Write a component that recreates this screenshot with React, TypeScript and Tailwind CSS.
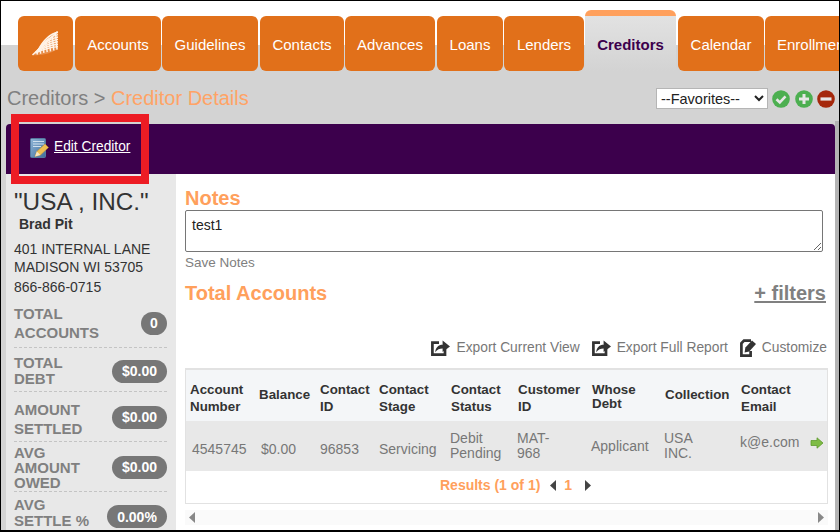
const tabs = [
  { label: "Accounts", cls: "w-[86px] mr-px" },
  { label: "Guidelines", cls: "w-[96px] mr-[2px]" },
  { label: "Contacts", cls: "w-[84px] mr-px" },
  { label: "Advances", cls: "w-[90px] mr-[2px]" },
  { label: "Loans", cls: "w-[66px] mr-px" },
  { label: "Lenders", cls: "w-[80px] mr-px" },
];

const twoLine = "mt-[5px] leading-[17px]";

const columns = [
  { head: ["Account", "Number"], headCls: twoLine, cell: ["4545745"], cellCls: "mt-[6px]", w: "w-[69px]", pl: "pl-[6px]" },
  { head: ["Balance"], headCls: "mb-[2px]", cell: ["$0.00"], cellCls: "mt-[6px]", w: "w-[61px]", pl: "pl-[6px]" },
  { head: ["Contact", "ID"], headCls: twoLine, cell: ["96853"], cellCls: "mt-[6px]", w: "w-[59px]", pl: "pl-[4px]" },
  { head: ["Contact", "Stage"], headCls: twoLine, cell: ["Servicing"], cellCls: "mt-[6px]", w: "w-[72px]", pl: "pl-[4px]" },
  { head: ["Contact", "Status"], headCls: twoLine, cell: ["Debit", "Pending"], cellCls: "", w: "w-[67px]", pl: "pl-[3px]" },
  { head: ["Customer", "ID"], headCls: twoLine, cell: ["MAT-", "968"], cellCls: "", w: "w-[74px]", pl: "pl-[3px]" },
  { head: ["Whose", "Debt"], headCls: "mt-[2px] leading-[14px]", cell: ["Applicant"], cellCls: "", w: "w-[73px]", pl: "pl-[3px]" },
  { head: ["Collection"], headCls: "mb-[2px]", cell: ["USA", "INC."], cellCls: "", w: "w-[76px]", pl: "pl-[3px]" },
  { head: ["Contact", "Email"], headCls: twoLine, cell: ["k@e.com"], cellCls: "mb-[8px]", w: "w-[69px]", pl: "pl-[3px]" },
];

const stats = [
  { label: ["TOTAL", "ACCOUNTS"], value: "0", h: "h-[49px]", lh: "leading-[19px]", badge: "w-[26px]", labelMt: "", badgeMt: "" },
  { label: ["TOTAL", "DEBT"], value: "$0.00", h: "h-[44px]", lh: "leading-[16px]", badge: "w-[55px]", labelMt: "mt-[2px]", badgeMt: "mt-[3px]" },
  { label: ["AMOUNT", "SETTLED"], value: "$0.00", h: "h-[50px]", lh: "leading-[19px]", badge: "w-[55px]", labelMt: "mt-[5px]", badgeMt: "mt-[2px]" },
  { label: ["AVG", "AMOUNT", "OWED"], value: "$0.00", h: "h-[50px]", lh: "leading-[15px]", badge: "w-[55px]", labelMt: "mt-[2px]", badgeMt: "mt-[2px]" },
  { label: ["AVG", "SETTLE %"], value: "0.00%", h: "h-[40px]", lh: "leading-[16px]", badge: "w-[60px]", labelMt: "mt-[2px]", badgeMt: "mt-[9px]" },
];

function Logo() {
  // warped mesh: spokes run from the long top edge down to the bottom edge
  const steps = [1, 2, 3, 4, 5, 6, 7];
  return (
    <svg width="27" height="25" viewBox="0 0 27 25" fill="none" stroke="#fff3e8" strokeWidth="1.45">
      <path d="M0.5 24 L25.5 0.5 L26 18 Q13 25.5 0.5 24Z" fill="#e98d48" stroke="none" />
      <path d="M0.5 24 L25.5 0.5" />
      {steps.map((i) => (
        <path key={`s${i}`} d={`M${0.5 + i * 3.3} ${24 - i * 3.1} Q${2 + i * 3.2} ${20 - i * 0.9} ${2 + i * 3.3} ${24.3 - i * 0.8}`} />
      ))}
      {steps.map((i) => (
        <path key={`c${i}`} d={`M${3 + i * 0.4} ${22.5 - i * 0.4} Q${14} ${19 - i * 2.2} ${26} ${18 - i * 2.4}`} />
      ))}
    </svg>
  );
}

function EditIcon() {
  return (
    <svg width="19" height="20" viewBox="0 0 19 20">
      <defs>
        <linearGradient id="book" x1="0" y1="0" x2="1" y2="1">
          <stop offset="0" stopColor="#8fb6d8" />
          <stop offset="1" stopColor="#3f6d9c" />
        </linearGradient>
      </defs>
      <rect x="0.5" y="0.5" width="15" height="19" rx="1" fill="url(#book)" stroke="#54799e" />
      <path d="M3 3.5h11M3 6h11M3 8.5h8" stroke="#cfe0ee" strokeWidth="1" />
      <path d="M5 18.5 L6.8 13.5 L15 6 L18.5 9.5 L10.5 17Z" fill="#efbe52" stroke="#c48f2a" strokeWidth="0.5" />
      <path d="M5 18.5 L6.8 13.5 L10.5 17Z" fill="#f6e6c2" />
    </svg>
  );
}

function RoundIcon({ color, kind }: { color: string; kind: "check" | "plus" | "minus" }) {
  return (
    <svg width="18" height="18" viewBox="0 0 18 18">
      <circle cx="9" cy="9" r="8.8" fill={color} />
      {kind === "check" && <path d="M4.5 9.2 L7.8 12.4 L13.5 6.4" fill="none" stroke="#e6e6e6" strokeWidth="2.6" />}
      {kind === "plus" && <path d="M9 4v10M4 9h10" stroke="#e6e6e6" strokeWidth="3" />}
      {kind === "minus" && <path d="M3.5 9h11" stroke="#e6e6e6" strokeWidth="3.2" />}
    </svg>
  );
}

function ExportIcon() {
  return (
    <svg width="19" height="16" viewBox="0 0 19 16">
      <path d="M8 2.6H1.4V14.6H14V9" fill="none" stroke="#333" strokeWidth="2.7" />
      <path d="M4.2 12.2 C4.6 7.4 7.6 4.8 11.6 4.8 V0.6 L19 6.4 L11.6 12 V8.6 C8.6 8.6 6.2 9.6 4.2 12.2Z" fill="#333" />
    </svg>
  );
}

function CustomizeIcon() {
  return (
    <svg width="16" height="18" viewBox="0 0 16 18">
      <path d="M11 1.6H4L1.4 4.4V16.6H10.6V12" fill="none" stroke="#333" strokeWidth="2.7" />
      <path d="M4.6 13.4 L5.4 8.6 L12 1.4 L16 5 L9.2 12.4Z" fill="#333" />
    </svg>
  );
}

function Triangle({ dir, color }: { dir: "left" | "right"; color: string }) {
  return (
    <svg width="6" height="11" viewBox="0 0 6 11">
      <path d={dir === "left" ? "M6 0V11L0 5.5Z" : "M0 0V11L6 5.5Z"} fill={color} />
    </svg>
  );
}

export default function App() {
  return (
    <div className="relative h-[532px] w-[840px] overflow-hidden border-t border-r border-b-2 border-l border-black bg-[#d3d3d3] font-['Liberation_Sans',Arial,sans-serif]">
      <header className="h-[44px] bg-white pl-[17px] pt-[9px]">
        <nav className="flex items-end text-[15px] text-white">
          <div className="mr-[2px] flex h-[55px] w-[55px] shrink-0 items-center justify-center rounded-[6px] bg-[#e1701a] pb-px">
            <Logo />
          </div>
          {tabs.map((t) => (
            <a key={t.label} className={`${t.cls} flex h-[55px] shrink-0 items-center justify-center rounded-[6px] bg-[#e1701a] pt-[3px]`}>
              {t.label}
            </a>
          ))}
          <a className="mr-[2px] flex h-[61px] w-[91px] shrink-0 items-center justify-center rounded-t-[6px] border-t-[6px] border-[#ffa05c] bg-[linear-gradient(#e2e2e2,#d3d3d3)] pt-[3px] font-bold text-[#3c004c]">
            Creditors
          </a>
          <a className="mr-px flex h-[55px] w-[86px] shrink-0 items-center justify-center rounded-[6px] bg-[#e1701a] pt-[3px]">Calendar</a>
          <a className="flex h-[55px] w-[86px] shrink-0 items-center rounded-[6px] bg-[#e1701a] pl-[12px] pt-[3px]">Enrollment</a>
        </nav>
      </header>

      <div className="mt-[27px] flex h-[52px] items-start justify-between pl-[6px] pr-[4px] pt-[14px]">
        <div className="text-[20px] leading-[24px] text-[#808080]">
          Creditors &gt; <span className="text-[#ffa366]">Creditor Details</span>
        </div>
        <div className="mt-[2px] flex items-center gap-[4px]">
          <select className="mr-px h-[21px] w-[112px] border border-[#b5b5b5] bg-white text-[14.5px] text-[#222]">
            <option>--Favorites--</option>
          </select>
          <span className="-ml-px mr-px flex">
            <RoundIcon color="#4caf50" kind="check" />
          </span>
          <RoundIcon color="#4caf50" kind="plus" />
          <RoundIcon color="#a5280c" kind="minus" />
        </div>
      </div>

      <div className="ml-[5px] mr-[4px] flex h-[50px] items-center rounded-t-[4px] bg-[#3c004c] pb-[3px] pl-[24px]">
        <EditIcon />
        <a className="ml-[5px] text-[13.75px] text-white underline">Edit Creditor</a>
      </div>

      <div className="ml-[5px] mr-[4px] flex h-[358px] bg-white">
        <aside className="w-[170px] shrink-0 bg-[#e8e8e8] pl-[8px] pr-[9px] text-[#333]">
          <h1 className="mt-[14px] text-[24.3px] leading-[27px] text-[#333]">"USA , INC."</h1>
          <div className="ml-[5px] mt-px text-[14px] font-bold leading-[17px]">Brad Pit</div>
          <div className="mt-[7px] text-[14px] leading-[18px]">401 INTERNAL LANE</div>
          <div className="text-[14px] leading-[18px]">MADISON WI 53705</div>
          <div className="mt-px text-[14px] leading-[20px]">866-866-0715</div>
          <div className="mt-[2px]">
            {stats.map((s, i) => (
              <div
                key={i}
                className={`${s.h} ${s.lh} flex items-center justify-between ${i < stats.length - 1 ? "border-b border-dashed border-[#c4c4c4]" : ""}`}
              >
                <div className={`${s.labelMt} text-[15px] font-bold text-[#808080]`}>
                  {s.label.map((l) => (
                    <div key={l}>{l}</div>
                  ))}
                </div>
                <span className={`${s.badge} ${s.badgeMt} flex h-[23px] items-center justify-center rounded-full bg-[#777] text-[14px] font-bold text-white`}>
                  {s.value}
                </span>
              </div>
            ))}
          </div>
        </aside>

        <main className="min-w-0 flex-1 pl-[9px] pr-[7px]">
          <h2 className="mt-[13px] text-[20px] font-bold leading-[23px] text-[#ffa05c]">Notes</h2>
          <textarea
            readOnly
            defaultValue="test1"
            className="mr-[5px] block h-[42px] w-[638px] rounded-[2px] border border-[#767676] px-[6px] py-[6px] text-[14px] leading-[16px] text-[#222]"
          />
          <div className="mt-[2px] text-[13.5px] leading-[18px] text-[#808080]">Save Notes</div>
          <div className="mt-[9px] flex h-[24px] items-center justify-between pr-[2px] text-[20px] font-bold">
            <span className="text-[#ffa05c]">Total Accounts</span>
            <a className="text-[#808080] underline">+ filters</a>
          </div>
          <div className="mt-[32px] flex h-[22px] items-center justify-end gap-[12px] pr-px text-[13.8px] text-[#777]">
            <span className="flex items-center gap-[6px]">
              <ExportIcon />
              Export Current View
            </span>
            <span className="flex items-center gap-[6px]">
              <ExportIcon />
              Export Full Report
            </span>
            <span className="flex items-center gap-[6px]">
              <CustomizeIcon />
              Customize
            </span>
          </div>

          <div className="mt-[9px] border border-t-2 border-[#e2e2e2] text-[14px]">
            <div className="flex h-[51px] items-center bg-[#f4f6f8] text-[13.33px] font-bold leading-[16px] text-[#333]">
              {columns.map((c) => (
                <div key={c.head.join()} className={`${c.w} ${c.headCls} shrink-0 pl-[4px]`}>
                  {c.head.map((l) => (
                    <div key={l}>{l}</div>
                  ))}
                </div>
              ))}
            </div>
            <div className="flex h-[50px] items-center bg-[#e8e8e8] leading-[15px] text-[#777]">
              {columns.map((c) => (
                <div key={c.cell[0]} className={`${c.w} ${c.pl} ${c.cellCls} shrink-0`}>
                  {c.cell.map((l) => (
                    <div key={l}>{l}</div>
                  ))}
                </div>
              ))}
              <svg width="14" height="12" viewBox="0 0 14 12" className="mb-[6px] ml-[4px]">
                <path d="M1 3.5H7V0.8L13 6L7 11.2V8.5H1Z" fill="#7ebc45" stroke="#5e9a2e" strokeWidth="0.8" />
              </svg>
            </div>
            <div className="flex h-[32px] items-center pb-[4px] pl-[254px] font-bold text-[#ffa05c]">
              Results (1 of 1)
              <span className="ml-[10px]"><Triangle dir="left" color="#444" /></span>
              <span className="ml-[8px] mr-[13px]">1</span>
              <Triangle dir="right" color="#444" />
            </div>
          </div>
          <div className="mt-[6px] flex h-[15px] items-center justify-between bg-[#fafafa] px-[4px]">
            <Triangle dir="left" color="#888" />
            <Triangle dir="right" color="#888" />
          </div>
        </main>
      </div>

      <div className="absolute bottom-0 right-0 top-[120px] w-[4px] bg-[#b4b4b4]" />
      <div className="absolute left-[10px] top-[113px] h-[70px] w-[138px] border-[8px] border-[#ed1c24]" />
    </div>
  );
}
